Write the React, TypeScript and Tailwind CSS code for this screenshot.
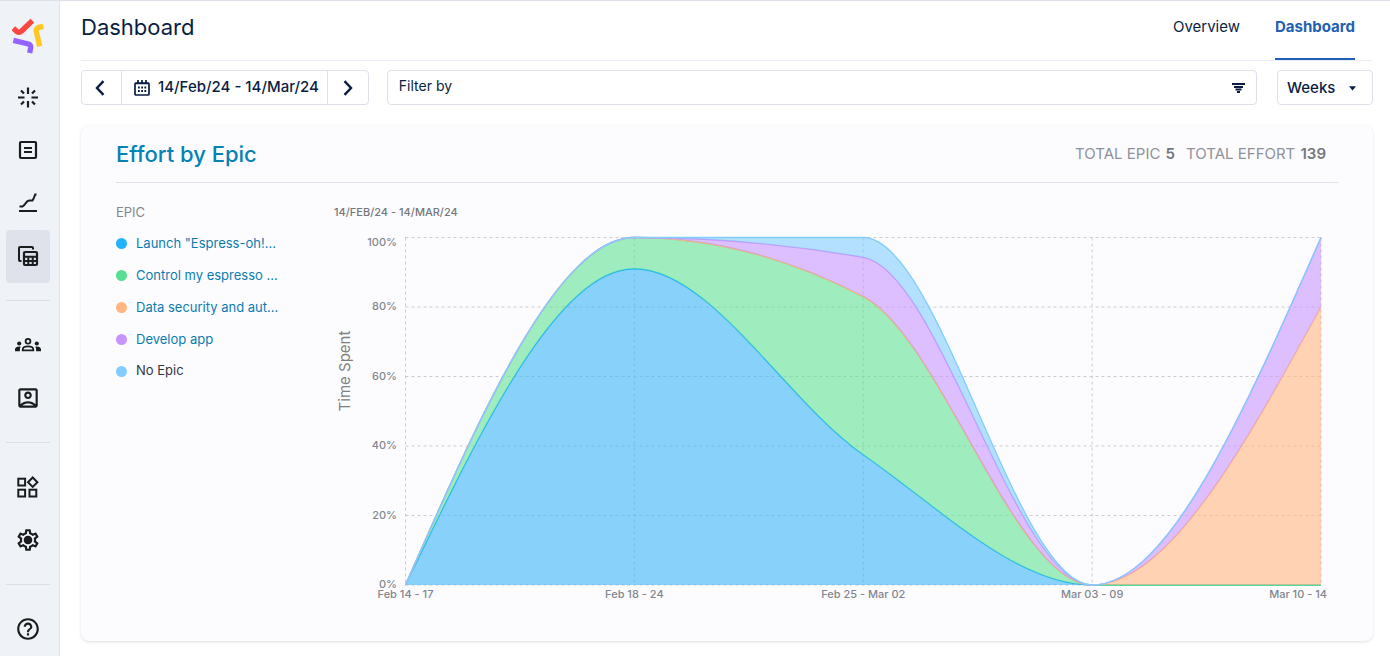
import React, { useLayoutEffect, useRef, useState } from "react";
import {
  MdHelpOutline,
  MdOutlineAccountBox,
  MdOutlineSettings,
} from "react-icons/md";

type IconProps = { className?: string };

const Logo = () => (
  <svg width="32" height="36" viewBox="36 56 96 108" fill="none" strokeWidth="16">
    <path d="M40 87 L50 96 Q58 102 65 95 L97 64" stroke="#f9483f" />
    <path d="M130 81 L117 84 Q107 88 109 97 L119 141" stroke="#ffc824" />
    <path d="M40 123 L85 134 Q93 137 92 145 L89 161" stroke="#9463ff" />
  </svg>
);

const BurstIcon = ({ className }: IconProps) => (
  <svg className={className} viewBox="0 0 26 26" fill="none" stroke="currentColor" strokeWidth="2.200">
    <path d="M13 3.500v6.500M13 17v6.500M3 13.500h6.500M16.500 13.500H23M6 6.500l3 3M17 17.500l3 3M20 6.500l-3 3M9 17.500l-3 3" />
  </svg>
);

const ListIcon = ({ className }: IconProps) => (
  <svg className={className} viewBox="0 0 26 26" fill="none" stroke="currentColor" strokeWidth="2.200">
    <rect x="5" y="5" width="16" height="16" rx="1" />
    <path d="M9 11h8M9 15h8" />
  </svg>
);

const TrendIcon = ({ className }: IconProps) => (
  <svg className={className} viewBox="0 0 26 26" fill="none" stroke="currentColor" strokeWidth="2">
    <path d="M4 21h18M4.500 16.500h3l1.500-1.200 3.200-4 2-.8h3.300L19 7.700l1.200-3.200h1.300" />
  </svg>
);

const TablesIcon = ({ className }: IconProps) => (
  <svg className={className} viewBox="0 0 26 26" fill="none" stroke="currentColor" strokeWidth="2">
    <path d="M6.500 18H5a1 1 0 0 1-1-1V5a1 1 0 0 1 1-1h12a1 1 0 0 1 1 1v1.500" />
    <rect x="9" y="9" width="13" height="13" rx="1" strokeWidth="2.200" />
    <path d="M9 13.700h13M9 18h13M13.300 13.500V22M17.700 13.500V22" />
  </svg>
);

const GroupsIcon = ({ className }: IconProps) => (
  <svg className={className} viewBox="0 0 26 26" fill="currentColor">
    <circle cx="13" cy="9.200" r="2.400" fill="none" stroke="currentColor" strokeWidth="1.800" />
    <path d="M7.700 18.300v-.6c0-2 2.400-3.300 5.300-3.300s5.300 1.300 5.300 3.300v.6z" fill="none" stroke="currentColor" strokeWidth="1.800" />
    <circle cx="4.200" cy="11.500" r="2.100" />
    <circle cx="21.800" cy="11.500" r="2.100" />
    <path d="M0 19.200v-1.600c0-1.800 1.700-3 4.200-3 .5 0 1 0 1.500.1-.5.800-.8 1.700-.8 2.700v1.800zM26 19.200v-1.600c0-1.800-1.700-3-4.200-3-.5 0-1 0-1.500.1.5.800.8 1.700.8 2.700v1.800z" />
  </svg>
);

const WidgetsIcon = ({ className }: IconProps) => (
  <svg className={className} viewBox="0 0 26 26" fill="none" stroke="currentColor" strokeWidth="2">
    <rect x="3.300" y="4.700" width="6.800" height="6.800" />
    <rect x="3.300" y="15.700" width="6.800" height="6.800" />
    <rect x="14.500" y="15.700" width="6.800" height="6.800" />
    <path d="M17.700 3.500l4.700 4.700-4.700 4.700L13 8.200z" />
  </svg>
);

const GearIcon = ({ className }: IconProps) => (
  <svg className={className} viewBox="0 0 26 26" fill="currentColor">
    <MdOutlineSettings x="0" y="0" size={26} />
    <circle cx="13" cy="13" r="3.500" />
  </svg>
);

const CalendarIcon = () => (
  <svg width="16" height="16" viewBox="0 0 16 16" fill="none" stroke="currentColor" strokeWidth="1.700">
    <rect x="1" y="3" width="14" height="12" rx="1" />
    <path d="M1 3.500h14M4 0v3M8 0v3M12 0v3" />
    <path d="M4 7.500h8.500M4 11h8.500" strokeDasharray="1.800 1.400" strokeWidth="1.800" />
  </svg>
);

const navGroups = [
  [
    { label: "Getting started", icon: BurstIcon },
    { label: "Log", icon: ListIcon },
    { label: "Trends", icon: TrendIcon },
    { label: "Reports", icon: TablesIcon, active: true },
  ],
  [
    { label: "Teams", icon: GroupsIcon },
    { label: "Account", icon: MdOutlineAccountBox },
  ],
  [
    { label: "Apps", icon: WidgetsIcon },
    { label: "Settings", icon: GearIcon },
  ],
  [{ label: "Help", icon: MdHelpOutline }],
];

const Sidebar = () => (
  <aside className="flex w-[60px] shrink-0 flex-col border-r border-[#dfe1ea] bg-[#eff3f7] pr-1 pl-1.5 text-[#1b1c1e]">
    <a href="#" aria-label="Home" className="flex h-[70px] items-center justify-center pr-1.5">
      <Logo />
    </a>
    {navGroups.map((group, i) => (
      <nav key={i} className="flex flex-col pr-[5px]">
        {i > 0 && <hr className="mt-[17px] mb-[18px] border-[#dcdfe9]" />}
        {group.map(({ label, icon: Icon, active }: any) => (
          <a
            key={label}
            href="#"
            aria-label={label}
            className={`flex h-[53px] items-center justify-center rounded pb-px ${active ? "bg-[#dfe1eb]" : ""}`}
          >
            <Icon className="h-[26px] w-[26px]" />
          </a>
        ))}
      </nav>
    ))}
  </aside>
);

const Toolbar = () => (
  <div className="flex h-[35px] items-stretch text-[#091e42]">
    <div className="flex shrink-0 rounded border border-[#dfe1ea] bg-white">
      <button aria-label="Previous" className="flex w-[39px] items-center justify-center pr-1">
        <svg width="10" height="16" viewBox="0 0 10 16" fill="none" stroke="currentColor" strokeWidth="2.400">
          <path d="M8.500 1.200L2 8l6.500 6.800" />
        </svg>
      </button>
      <button className="flex items-center gap-2 border-x border-[#dfe1ea] pr-2 pl-3 text-[15px] font-medium">
        <CalendarIcon />
        14/Feb/24 - 14/Mar/24
      </button>
      <button aria-label="Next" className="flex w-10 items-center justify-center">
        <svg width="10" height="16" viewBox="0 0 10 16" fill="none" stroke="currentColor" strokeWidth="2.400">
          <path d="M1.500 1.200L8 8l-6.500 6.800" />
        </svg>
      </button>
    </div>

    <label className="ml-[18px] flex min-w-0 flex-1 items-center rounded border border-[#dfe1ea] bg-white px-[11px]">
      <input
        type="text"
        aria-label="Filter by"
        placeholder="Filter by"
        className="min-w-0 flex-1 pb-1 text-sm outline-none placeholder:text-[#091e42]"
      />
      <svg width="13" height="10" viewBox="0 0 13 10" fill="none" stroke="currentColor" strokeWidth="2">
        <path d="M0 1h13M2 4h9M3.500 6.500h6M5 9h3" />
      </svg>
    </label>

    <div className="relative ml-5 w-24 shrink-0">
      <select
        aria-label="Period"
        className="h-full w-full appearance-none rounded border border-[#dfe1ea] bg-white pt-0.5 pl-[9px] text-[15px] font-medium outline-none"
      >
        <option>Weeks</option>
        <option>Days</option>
        <option>Months</option>
      </select>
      <svg className="pointer-events-none absolute top-[16px] right-[17px]" width="7" height="5" viewBox="0 0 7 5">
        <path d="M0 .3h7L3.500 4.500z" fill="currentColor" />
      </svg>
    </div>
  </div>
);

// upper edge of each stacked layer, as a share of the week's total
const series = [
  { name: 'Launch "Espress-oh!...', dot: "bg-[#22b3fb]", color: "#22b3fb", fill: "#38b4f9", top: [0, 0.91, 0.375, 0, 0] },
  { name: "Control my espresso ...", dot: "bg-[#57de8f]", color: "#57de8f", fill: "#60e294", top: [0, 1, 0.83, 0, 0] },
  { name: "Data security and aut...", dot: "bg-[#ffb680]", color: "#ffb680", fill: "#ffb680", top: [0, 1, 0.83, 0, 0.8] },
  { name: "Develop app", dot: "bg-[#c894ff]", color: "#c894ff", fill: "#c894ff", top: [0, 1, 0.943, 0, 1] },
  { name: "No Epic", dot: "bg-[#82cdff]", color: "#82cdff", fill: "#82cdff", top: [0, 1, 1, 0, 1] },
];

const weeks = ["Feb 14 - 17", "Feb 18 - 24", "Feb 25 - Mar 02", "Mar 03 - 09", "Mar 10 - 14"];
const ticks = [0, 20, 40, 60, 80, 100];

type Point = [number, number];

// cubic segments with monotone tangents
const curve = (pts: Point[]) => {
  const n = pts.length;
  const s = pts.slice(1).map((p, i) => (p[1] - pts[i][1]) / (p[0] - pts[i][0]));
  const t: number[] = new Array(n).fill(0);
  for (let i = 1; i < n - 1; i++) {
    const a = s[i - 1];
    const b = s[i];
    t[i] = (Math.sign(a) + Math.sign(b)) * Math.min(Math.abs(a), Math.abs(b), Math.abs(a + b) / 4);
  }
  t[0] = (3 * s[0] - t[1]) / 2;
  t[n - 1] = (3 * s[n - 2] - t[n - 2]) / 2;
  return pts.slice(1).map((p, i) => {
    const [x0, y0] = pts[i];
    const d = (p[0] - x0) / 3;
    return `C${x0 + d},${y0 + d * t[i]} ${p[0] - d},${p[1] - d * t[i + 1]} ${p[0]},${p[1]}`;
  });
};

const EffortChart = () => {
  const ref = useRef<HTMLDivElement>(null);
  const [width, setWidth] = useState(1004);

  useLayoutEffect(() => {
    const el = ref.current;
    if (!el) return;
    const update = () => setWidth(el.clientWidth);
    update();
    const observer = new ResizeObserver(update);
    observer.observe(el);
    return () => observer.disconnect();
  }, []);

  const left = 71.5;
  const right = width - 17;
  const top = 8.5;
  const bottom = 356;
  const x = (i: number) => left + ((right - left) * i) / (weeks.length - 1);
  const y = (v: number) => bottom - (bottom - top) * v;

  return (
    <div ref={ref} className="min-w-0">
      <svg width={width} height="374" className="block">
        <g stroke="#ccc" strokeDasharray="3 3">
          {ticks.map((v) => (
            <line key={v} x1={left} x2={right} y1={y(v / 100)} y2={y(v / 100)} />
          ))}
          {weeks.map((w, i) => (
            <line key={w} x1={x(i)} x2={x(i)} y1={top} y2={bottom} />
          ))}
        </g>
        {series.map(({ name, color, fill, top: values }, i) => {
          const upper = values.map((v, j): Point => [x(j), y(v)]);
          const base = i ? series[i - 1].top : [0, 0, 0, 0, 0];
          const lower = base.map((v, j): Point => [x(j), y(v)]).reverse();
          const line = `M${upper[0]}${curve(upper).join("")}`;
          return (
            <g key={name}>
              <path d={`${line}L${lower[0]}${curve(lower).join("")}Z`} fill={fill} fillOpacity="0.6" />
              <path d={line} fill="none" stroke={color} strokeWidth="1.300" />
            </g>
          );
        })}
        <g className="fill-[#83868e] text-[11px] font-medium">
          {ticks.map((v) => (
            <text key={v} x="63" y={v === 100 ? y(1) + 8 : y(v / 100) + 3} textAnchor="end">
              {v}%
            </text>
          ))}
          {weeks.map((w, i) => (
            <text
              key={w}
              x={i === weeks.length - 1 ? right + 6 : x(i)}
              y={bottom + 13}
              textAnchor={i === weeks.length - 1 ? "end" : "middle"}
            >
              {w}
            </text>
          ))}
        </g>
        <text transform="translate(16 142) rotate(-90)" textAnchor="middle" className="fill-[#808080] text-[15px]">
          Time Spent
        </text>
      </svg>
    </div>
  );
};

const EffortCard = () => (
  <section className="rounded-lg bg-[#fcfcfe] px-[35px] pb-[38px] shadow-[0_1px_3px_rgba(0,0,0,0.12)]">
    <div className="flex h-[58px] items-center justify-between border-b border-[#dfe1ea] pr-3">
      <h2 className="pt-0.5 text-[22px] font-medium text-[#0583b5]">Effort by Epic</h2>
      <p className="flex gap-[11px] pt-0.5 text-[15px] text-[#8f929a]">
        <span>
          TOTAL EPIC <b className="ml-px font-semibold text-[#75777d]">5</b>
        </span>
        <span>
          TOTAL EFFORT <b className="ml-px font-semibold text-[#75777d]">139</b>
        </span>
      </p>
    </div>
    <div className="flex pt-[19px]">
      <div className="w-[218px] shrink-0 text-[13px]">
        <h3 className="leading-5 text-[#83868e]">EPIC</h3>
        <ul className="mt-[5px]">
          {series.map(({ name, dot }) => (
            <li key={name} className="flex h-8 items-center gap-[9px]">
              <span className={`h-[11px] w-[11px] rounded-full ${dot}`} />
              {name === "No Epic" ? (
                <span className="text-[#35373c]">{name}</span>
              ) : (
                <a href="#" className="pt-0.5 text-[#0c7cb0]">
                  {name}
                </a>
              )}
            </li>
          ))}
        </ul>
      </div>
      <div className="min-w-0 flex-1">
        <h3 className="h-[27px] text-[11px] leading-5 font-medium text-[#75777d]">
          14/FEB/24 - 14/MAR/24
        </h3>
        <EffortChart />
      </div>
    </div>
  </section>
);

const App = () => (
  <div className="flex min-h-screen border-t border-[#dfe1ea] bg-white font-[Inter,'Liberation_Sans',sans-serif]">
    <Sidebar />
    <main className="min-w-0 flex-1 pr-[17px] pl-[21px]">
      <header className="flex h-[60px] justify-between border-b border-[#ebecf5] text-[#091e42]">
        <h1 className="pt-2 text-[22px] leading-9">Dashboard</h1>
        <nav className="mr-[18px] flex gap-[35px] text-[15px] leading-[52px]">
          <a href="#">Overview</a>
          <a href="#" className="border-b-2 border-[#2260b3] font-bold text-[#2260b3]">
            Dashboard
          </a>
        </nav>
      </header>
      <div className="pt-[9px]">
        <Toolbar />
      </div>
      <div className="pt-5">
        <EffortCard />
      </div>
    </main>
  </div>
);

export default App;
